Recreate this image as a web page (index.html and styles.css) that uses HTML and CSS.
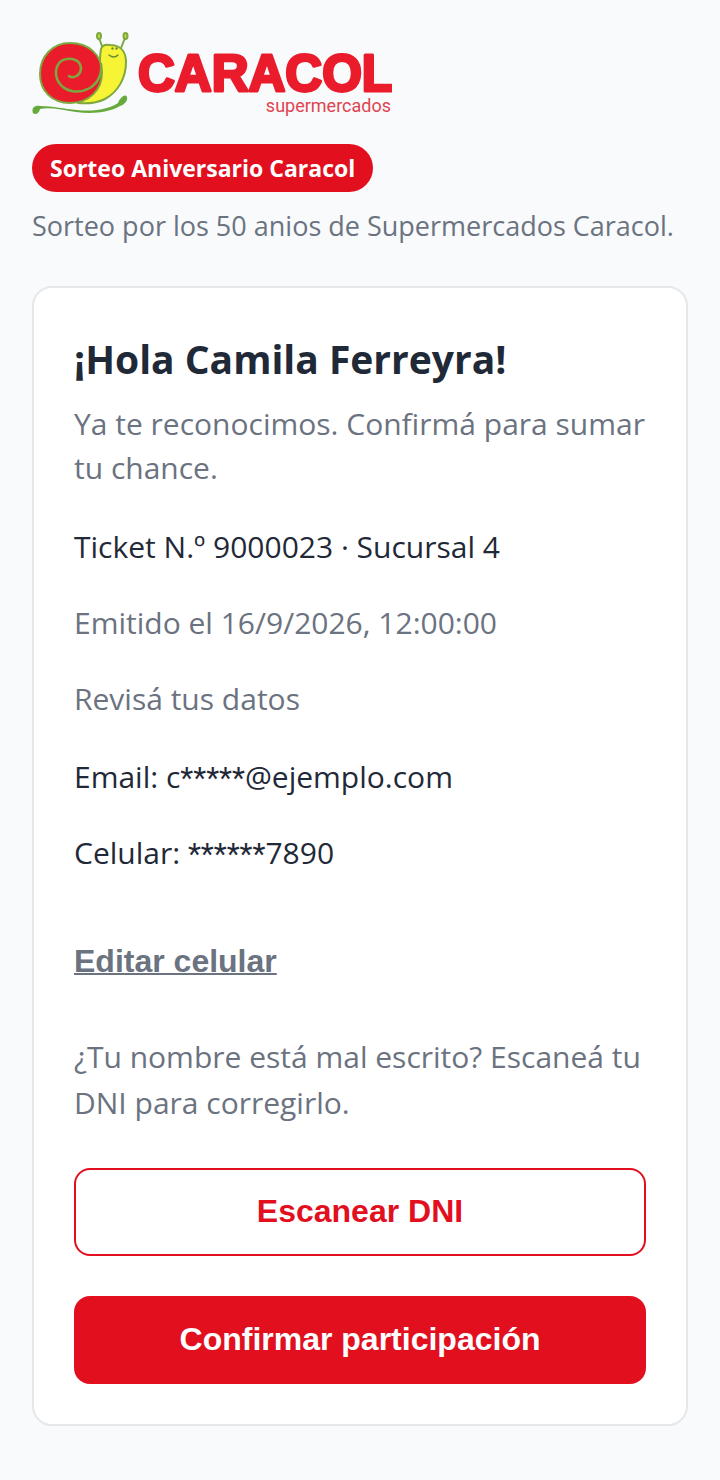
FILE: index.html
```html
<!DOCTYPE html>
<html lang="es">
<head>
<meta charset="utf-8">
<meta name="viewport" content="width=device-width, initial-scale=1">
<title>Sorteo Aniversario Caracol</title>
<link rel="stylesheet" href="styles.css">
</head>
<body>
<main class="page">
  <header class="header">
    <svg class="logo" viewBox="0 0 360 88" role="img" aria-label="Caracol supermercados">
      <g stroke="#7da83f" stroke-width="2" stroke-linecap="round" stroke-linejoin="round">
        <path fill="#f7f436" d="M69 17C70 14 73 12 78 13C88 13 94 19 94 30C94 46 86 60 73 67C65 71 56 72 46 71L66 45C69 36 67 28 69 17Z"/>
        <path fill="none" d="M70 14L67 6M89 16L93 6"/>
        <ellipse cx="67" cy="4" rx="2" ry="3" fill="#c9dc45"/>
        <ellipse cx="93.500" cy="4" rx="2" ry="3" fill="#c9dc45"/>
        <path fill="#ea1c2c" d="M38 11C21 11 8 24 8 42C8 59 20 71 38 71C57 71 70 58 70 41C70 22 56 11 38 11Z"/>
        <path fill="none" stroke-width="2.500" d="M37 44C41 47 48 44 49 37C49 29 42 26 35 27C26 28 22 37 25 47C31 61 47 62 58 56C67 50 70 42 69 32"/>
      </g>
      <circle cx="80.500" cy="16.500" r="1.200" fill="#6b8c35"/>
      <circle cx="84.500" cy="16.500" r="1.200" fill="#6b8c35"/>
      <path d="M77 23Q82 27 86 23" fill="none" stroke="#6b8c35" stroke-width="1.500" stroke-linecap="round"/>
      <path fill="#67aa3c" d="M1 81C-1 76 3 73 8 74C21 74 32 77 45 78C62 80 77 77 86 71C88 65 94 61 95 65C96 69 92 73 88 74C76 81 60 82 44 80C30 78 19 75 8 77C7 82 3 83 1 81Z"/>
      <text class="logo-name" x="106" y="59">CARACOL</text>
      <text class="logo-sub" x="359" y="80">supermercados</text>
    </svg>
    <span class="badge">Sorteo Aniversario Caracol</span>
    <p class="tagline">Sorteo por los 50 anios de Supermercados Caracol.</p>
  </header>
  <section class="card">
    <h1 class="title">¡Hola Camila Ferreyra!</h1>
    <p class="lead">Ya te reconocimos. Confirmá para sumar tu chance.</p>
    <div class="details">
      <p>Ticket N.º 9000023 · Sucursal 4</p>
      <p class="muted">Emitido el 16/9/2026, 12:00:00</p>
      <p class="muted">Revisá tus datos</p>
    </div>
    <div class="details contact">
      <p>Email: c<span class="mask">*****</span>@ejemplo.com</p>
      <p>Celular: <span class="mask">******</span>7890</p>
    </div>
    <button class="link" type="button">Editar celular</button>
    <p class="muted hint">¿Tu nombre está mal escrito? Escaneá tu DNI para corregirlo.</p>
    <div class="actions">
      <button class="button outline" type="button">Escanear DNI</button>
      <button class="button primary" type="button">Confirmar participación</button>
    </div>
  </section>
</main>
</body>
</html>
```
FILE: styles.css
```css
* { box-sizing: border-box; }
body {
  margin: 0;
  background: #f8fafc;
  color: #1f2937;
  font-family: "Segoe UI", "Open Sans", "Noto Sans", sans-serif;
  font-size: 30px;
  line-height: 46px;
}
h1, p { margin: 0; }
.page { padding: 32px; }
.header {
  display: flex;
  flex-direction: column;
  align-items: flex-start;
}
.logo { width: 360px; max-width: 100%; height: auto; }
.logo-name {
  font-family: "Liberation Sans", Arial, sans-serif;
  font-size: 51px;
  font-weight: 700;
  fill: #ea1c2c;
  stroke: #ea1c2c;
  stroke-width: 3px;
  stroke-linejoin: round;
}
.logo-sub {
  font-family: Roboto, sans-serif;
  font-size: 18px;
  text-anchor: end;
  fill: #e04450;
}
.badge {
  margin-top: 24px;
  padding: 0 18px;
  border-radius: 24px;
  background: #e20f1f;
  color: #fff;
  font-size: 23px;
  font-weight: 700;
  line-height: 48px;
}
.tagline {
  margin-top: 12px;
  color: #6b7280;
  font-size: 27px;
  line-height: 44px;
}
.card {
  margin-top: 38px;
  padding: 40px;
  border: 2px solid #e5e7eb;
  border-radius: 20px;
  background: #fff;
}
.title {
  font-size: 39px;
  font-weight: 700;
  line-height: 62px;
}
.lead {
  margin-top: 12px;
  color: #6b7280;
  line-height: 44px;
}
.details {
  display: grid;
  gap: 30px;
  margin-top: 34px;
}
.contact { margin-top: 32px; }
.mask {
  font-family: Roboto, sans-serif;
  line-height: 1;
}
.muted { color: #6b7280; }
.link, .button {
  font-family: "Liberation Sans", Arial, sans-serif;
  font-size: 32px;
  font-weight: 700;
  cursor: pointer;
}
.link {
  display: block;
  margin-top: 62px;
  padding: 0;
  border: 0;
  background: none;
  color: #6b7280;
  line-height: 46px;
  text-decoration: underline;
  text-decoration-thickness: 2px;
}
.hint { margin-top: 50px; }
.actions {
  display: grid;
  gap: 40px;
  margin-top: 42px;
}
.button {
  height: 88px;
  padding: 0 16px 2px;
  border: 2px solid #e20f1f;
  border-radius: 16px;
}
.outline { background: #fff; color: #e20f1f; }
.primary { background: #e20f1f; color: #fff; }
```
